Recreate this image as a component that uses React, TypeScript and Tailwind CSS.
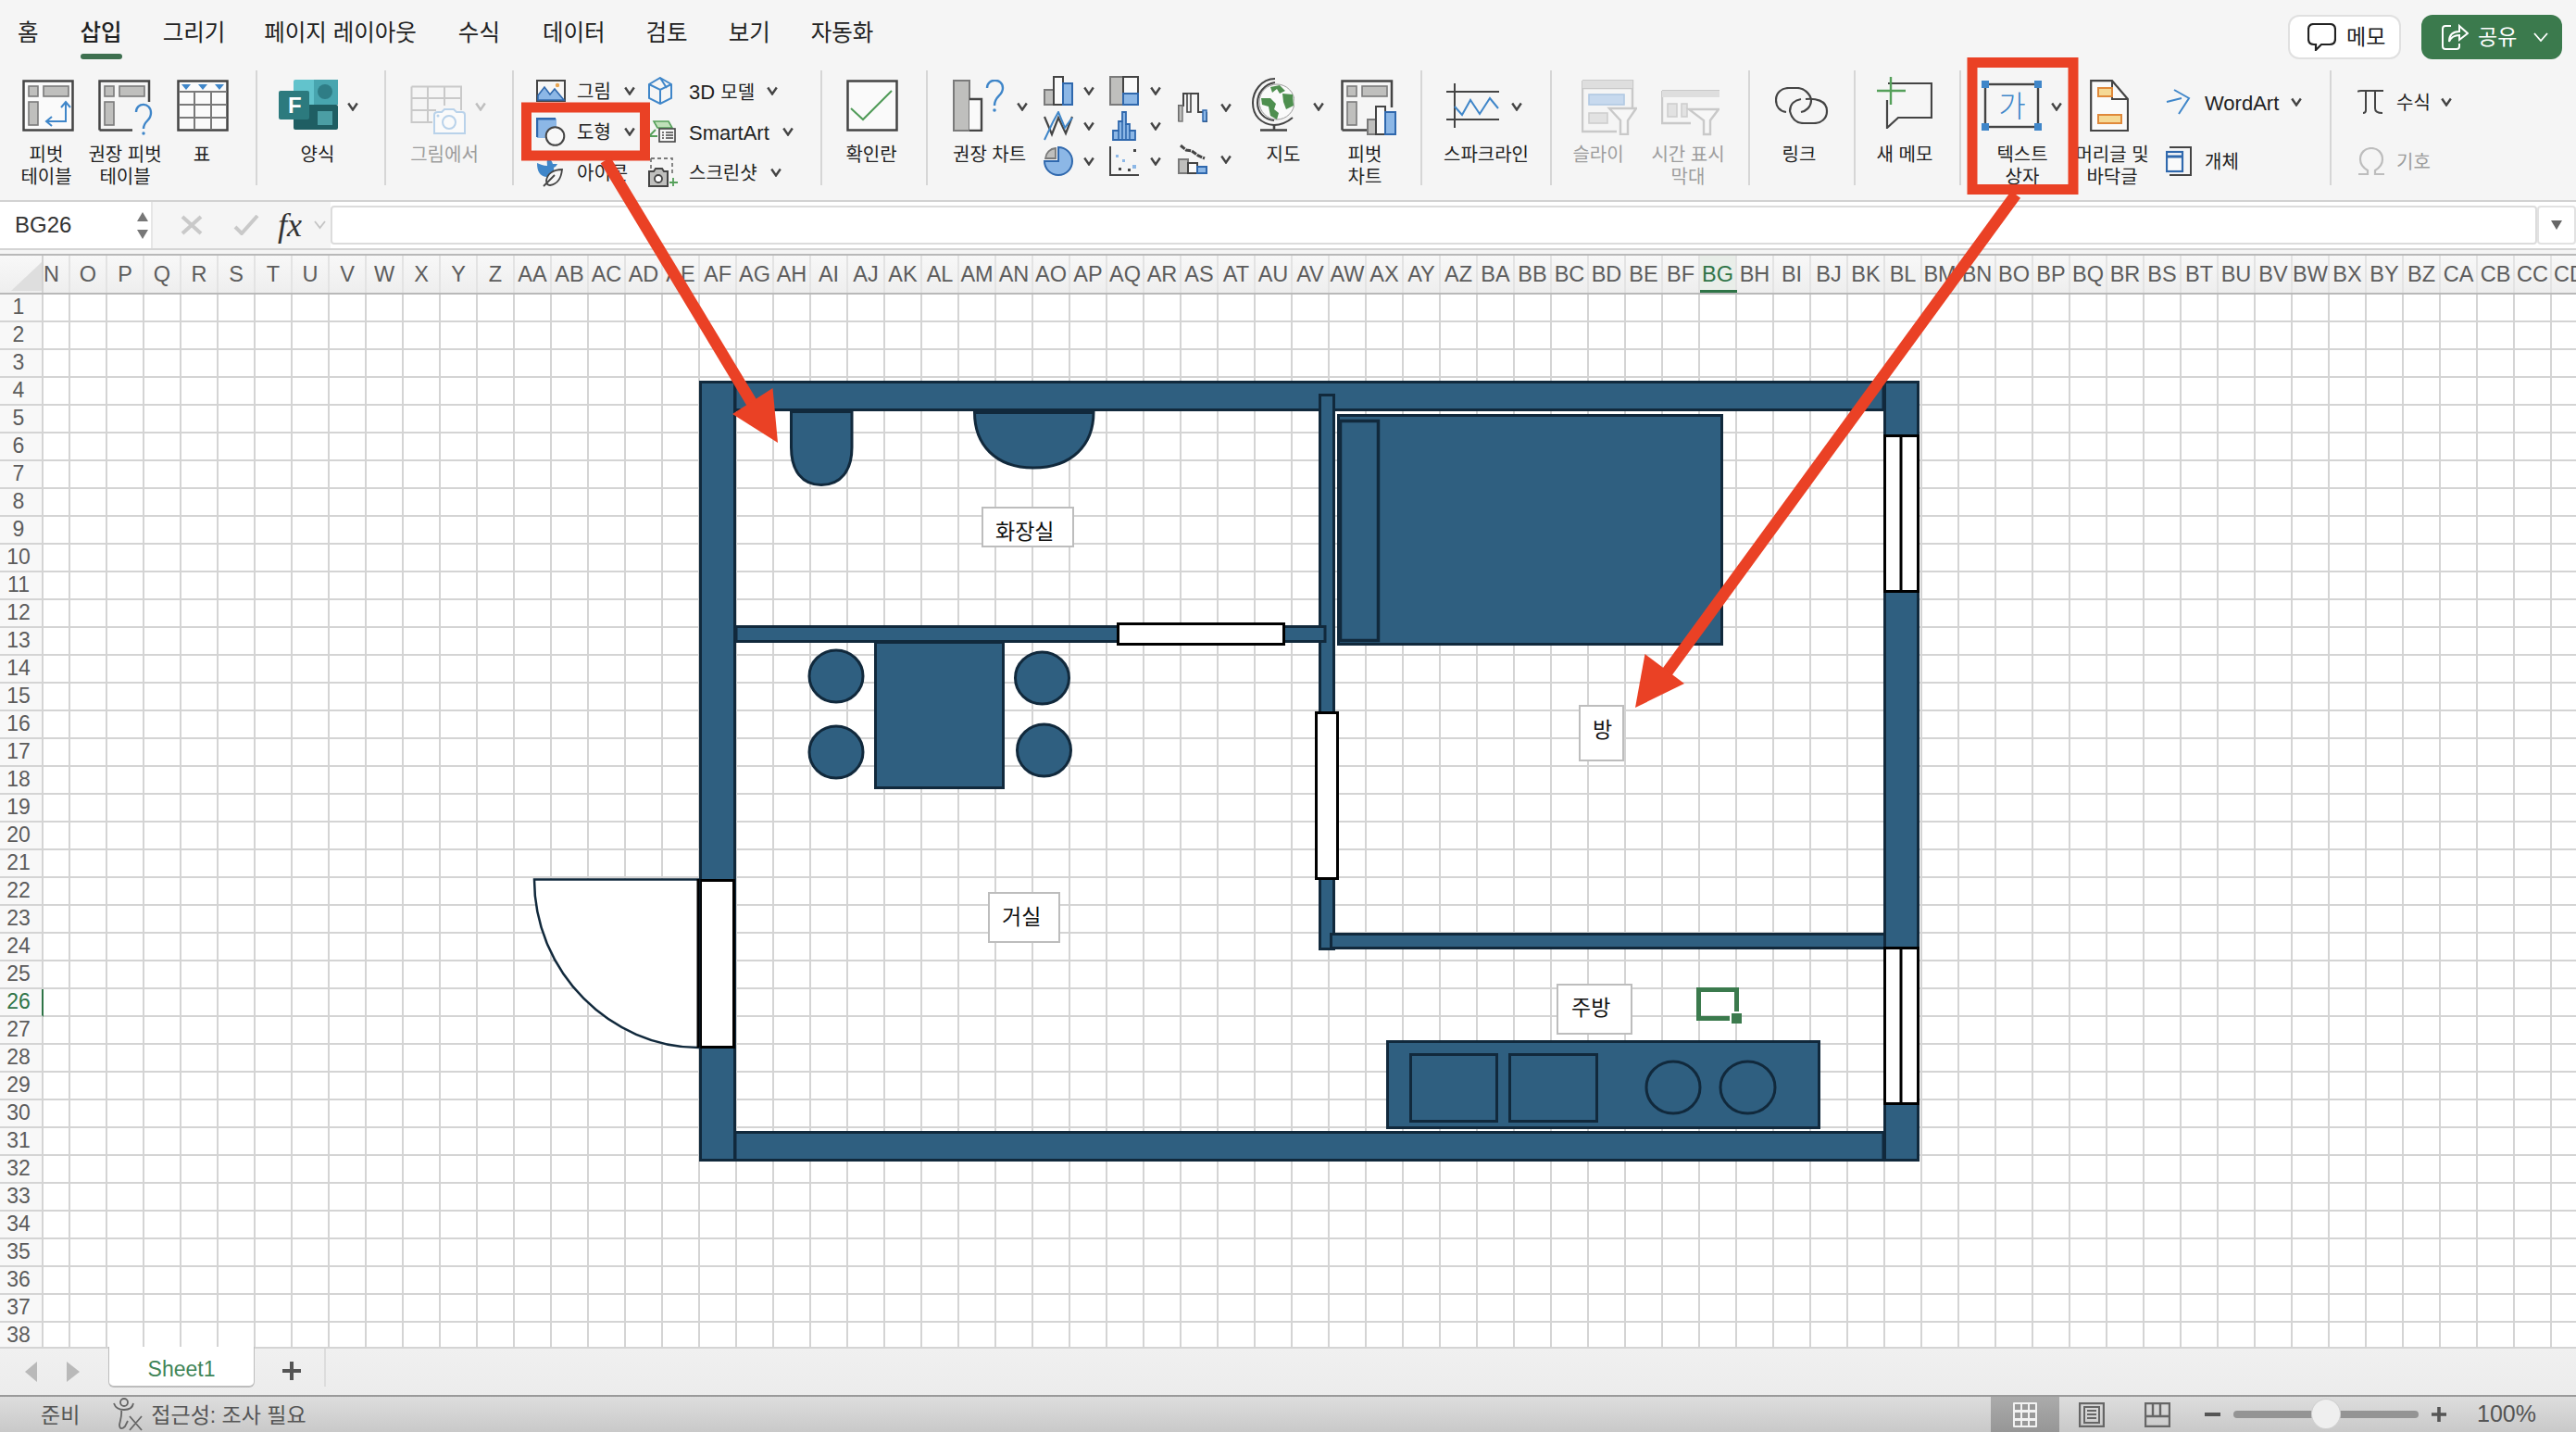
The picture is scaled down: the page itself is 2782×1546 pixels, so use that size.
import React from "react";

const Ic = ({ w, h, children, cls = "" }: { w: number; h: number; children: React.ReactNode; cls?: string }) => (
  <svg width={w} height={h} viewBox={`0 0 ${w} ${h}`} fill="none" className={`shrink-0 ${cls}`}>
    {children}
  </svg>
);

const Chev = ({ cls = "" }: { cls?: string }) => (
  <svg width="12" height="10" viewBox="0 0 12 10" fill="none" className={`shrink-0 ${cls}`}>
    <path d="M1.2 1.5L6 8.5L10.8 1.5" stroke="#444" strokeWidth="2.4" />
  </svg>
);

const G = "#bfbfbd";
const GS = "#7a7a7a";
const D = "#444";
const B = "#8cb7e6";
const BD = "#2f68ad";
const BM = "#3f86c9";

const PivotTable = () => (
  <Ic w={56} h={56}>
    <rect x="1.5" y="1.5" width="53" height="53" fill="#fafafa" stroke={D} strokeWidth="2.5" />
    <rect x="7" y="7" width="10" height="11" fill={G} stroke={GS} strokeWidth="1.6" />
    <rect x="23" y="7" width="27" height="11" fill={G} stroke={GS} strokeWidth="1.6" />
    <rect x="7" y="24" width="10" height="25" fill={G} stroke={GS} strokeWidth="1.6" />
    <path d="M47 24V45H27M42 30L47 24L52 30M32 40L26 45L32 50" stroke={BM} strokeWidth="2" />
  </Ic>
);
const RecPivot = () => (
  <Ic w={60} h={60}>
    <path d="M1.5 54.5V1.5H55V24M1.5 54.5H37" stroke={D} strokeWidth="2.5" />
    <rect x="7" y="7" width="10" height="11" fill={G} stroke={GS} strokeWidth="1.6" />
    <rect x="23" y="7" width="27" height="11" fill={G} stroke={GS} strokeWidth="1.6" />
    <rect x="7" y="24" width="10" height="25" fill={G} stroke={GS} strokeWidth="1.6" />
    <path d="M41 35C41 24 57 24 57 36C57 45 49 44 49 53" stroke={BM} strokeWidth="2.4" />
    <circle cx="49" cy="58" r="1.7" fill={BM} />
  </Ic>
);
const TableIc = () => (
  <Ic w={56} h={56}>
    <rect x="1.5" y="1.5" width="53" height="53" fill="#fafafa" stroke={D} strokeWidth="2.5" />
    <path d="M2 13H54M2 27H54M2 41H54M19 13V54M37 13V54" stroke={GS} strokeWidth="2" />
    <path d="M5 5H15L10 11ZM23 5H33L28 11ZM41 5H51L46 11Z" fill={BM} />
  </Ic>
);
const Forms = () => (
  <Ic w={64} h={54}>
    <rect x="16" y="0" width="48" height="27" rx="2" fill="#62c3cc" />
    <rect x="38" y="0" width="26" height="27" fill="#48a5af" />
    <circle cx="50" cy="13" r="8" fill="#2f7d86" />
    <rect x="16" y="27" width="48" height="27" rx="2" fill="#1f5e63" />
    <rect x="42" y="34" width="16" height="15" fill="#4b9ea4" />
    <rect x="0" y="12" width="33" height="31" rx="2" fill="#2c7a7e" />
    <text x="10" y="36" fontSize="24" fontWeight="700" fill="#fff" fontFamily="Liberation Sans, sans-serif">F</text>
  </Ic>
);
const FromPic = () => (
  <Ic w={60} h={54}>
    <path d="M1.5 1.5H55V27M1.5 1.5V40H24M19 1.5V40M37 1.5V22M1.5 14H55M1.5 27H28" stroke="#c9c9c9" strokeWidth="2" />
    <path d="M26 52V32C26 30 28 29 30 29H34L37 26H47L50 29H56C58 29 59 30 59 32V52Z" fill="#fafafa" stroke="#b9d2ea" strokeWidth="2" />
    <circle cx="42" cy="40" r="7" stroke="#b9d2ea" strokeWidth="2" />
    <circle cx="30" cy="33" r="1.5" fill="#b9d2ea" />
  </Ic>
);
const Picture = () => (
  <Ic w={32} h={24}>
    <rect x="1" y="1" width="30" height="22" fill="#f6f6f6" stroke={D} strokeWidth="2" />
    <path d="M2 22V17L9 8L15 16L20 10L30 22Z" fill={B} stroke={BD} strokeWidth="1.6" />
    <circle cx="23" cy="6" r="2.2" fill="#e9a552" />
  </Ic>
);
const Shapes = () => (
  <Ic w={32} h={31}>
    <rect x="1" y="1" width="21" height="21" fill={B} />
    <path d="M1 21V1.2H21" stroke={BD} strokeWidth="2.4" />
    <circle cx="20.5" cy="20" r="9.8" fill="#f8f8f8" stroke={D} strokeWidth="2" />
  </Ic>
);
const IconsIc = () => (
  <Ic w={30} h={31}>
    <path d="M1 5C1 14 4 19 11 20C17 19 20 16 19 10C21 9 22 8 23 6L18 6C17 3 15 0 13 1C11 2 12 5 12 8C8 8 4 6 1 5Z" fill={BM} />
    <path d="M28 12C18 12 12 17 11 24C11 27 12 29 15 29C22 28 27 22 28 12ZM8 30L20 18" fill="#f6f6f6" stroke={D} strokeWidth="1.8" />
  </Ic>
);
const Cube = () => (
  <Ic w={26} h={30}>
    <path d="M13 1L25 8V23L13 29L1 23V8ZM1 8L13 14L25 8M13 14V29M13 1L20 12" stroke={BM} strokeWidth="2" />
  </Ic>
);
const SmartArt = () => (
  <Ic w={30} h={24}>
    <path d="M6 1H22L26 8H10Z" fill="#bfe0b9" stroke="#55a05a" strokeWidth="1.6" />
    <path d="M1 17L8 10" stroke="#55a05a" strokeWidth="2" />
    <path d="M1 17H10" stroke="#55a05a" strokeWidth="2" />
    <rect x="12" y="9" width="17" height="14" fill="#f8f8f8" stroke={D} strokeWidth="1.6" />
    <path d="M15 13H17M19 13H27M15 16H17M19 16H27M15 19H17M19 19H27" stroke={D} strokeWidth="1.3" />
  </Ic>
);
const Screenshot = () => (
  <Ic w={32} h={32}>
    <path d="M3 1H26V19M3 1V15" stroke={GS} strokeWidth="1.8" strokeDasharray="4 3" />
    <path d="M1 31V15H6L8 12H15L17 15H21V31Z" fill={G} stroke={D} strokeWidth="2" />
    <circle cx="11" cy="23" r="4" fill="#fff" stroke={D} strokeWidth="1.8" />
    <path d="M27 22V31M23 27H32" stroke="#55a05a" strokeWidth="1.8" />
  </Ic>
);
const CheckIc = () => (
  <Ic w={56} h={56}>
    <rect x="1.5" y="1.5" width="53" height="53" fill="#fafafa" stroke={D} strokeWidth="2.5" />
    <path d="M5 31L18 43L49 12" stroke="#4f9a57" strokeWidth="2" />
  </Ic>
);
const RecChart = () => (
  <Ic w={56} h={56}>
    <rect x="1" y="1" width="17" height="54" fill={G} stroke={GS} strokeWidth="2" />
    <path d="M18 21H31V55H18" fill="#fafafa" stroke={D} strokeWidth="2.4" />
    <path d="M37 9C37 -2 54 -2 54 9C54 18 45 17 45 28" stroke={BM} strokeWidth="2.4" />
    <circle cx="45" cy="33" r="1.8" fill={BM} />
  </Ic>
);
const Col = () => (
  <Ic w={32} h={32}>
    <rect x="1" y="15" width="10" height="16" fill={G} stroke={GS} strokeWidth="2" />
    <rect x="11" y="1" width="10" height="30" fill="#fafafa" stroke={D} strokeWidth="2" />
    <rect x="21" y="8" width="10" height="23" fill={B} stroke={BD} strokeWidth="2" />
  </Ic>
);
const Hier = () => (
  <Ic w={32} h={32}>
    <rect x="1" y="1" width="14" height="30" fill={G} stroke={GS} strokeWidth="2" />
    <rect x="15" y="1" width="16" height="18" fill="#fafafa" stroke={D} strokeWidth="2" />
    <rect x="15" y="19" width="16" height="12" fill={B} stroke={BD} strokeWidth="2" />
  </Ic>
);
const LineC = () => (
  <Ic w={32} h={32}>
    <path d="M1 6L9 25L16 7L24 24L31 6" stroke={D} strokeWidth="2.2" />
    <path d="M1 31L10 12L16 1L23 18L31 7" stroke={BM} strokeWidth="2" />
  </Ic>
);
const Stat = () => (
  <Ic w={26} h={32}>
    <path d="M1 31V21H7V11H11V1H15V14H19V21H25V31Z" fill={B} stroke={BD} strokeWidth="1.8" />
    <path d="M7 21V31M11 11V31M15 14V31M19 21V31" stroke={BD} strokeWidth="1.6" />
  </Ic>
);
const Pie = () => (
  <Ic w={32} h={32}>
    <path d="M16 1A15 15 0 1 1 1 16H16Z" fill={B} stroke={BD} strokeWidth="2" />
    <path d="M13 2V13H2A12 12 0 0 1 13 2Z" fill={G} stroke={GS} strokeWidth="1.8" />
  </Ic>
);
const Scatter = () => (
  <Ic w={32} h={32}>
    <path d="M1 0V31H32" stroke={D} strokeWidth="2" />
    <path d="M7 9h3v3h-3zM14 14h3v3h-3zM25 20h4v4h-4z" fill={B} />
    <path d="M26 3h3v3h-3zM10 23h3v3h-3zM20 24h3v3h-3z" fill={D} />
  </Ic>
);
const Waterfall = () => (
  <Ic w={32} h={32}>
    <path d="M1 31V14H6V1H22V21H28V31H31V21" stroke={D} strokeWidth="2" />
    <rect x="1" y="14" width="4" height="17" fill={G} stroke={GS} strokeWidth="1.5" />
    <path d="M10 1H14V21H10Z" fill="#f5f5f5" stroke={D} strokeWidth="1.6" />
    <rect x="27" y="19" width="4" height="12" fill={B} stroke={BD} strokeWidth="1.5" />
  </Ic>
);
const Combo = () => (
  <Ic w={32} h={32}>
    <rect x="1" y="16" width="10" height="15" fill={G} stroke={GS} strokeWidth="2" />
    <rect x="11" y="20" width="10" height="11" fill="#fafafa" stroke={D} strokeWidth="2" />
    <rect x="21" y="24" width="10" height="7" fill={B} stroke={BD} strokeWidth="2" />
    <path d="M3 1L9 6L15 7L22 12L29 15" stroke={D} strokeWidth="3" strokeDasharray="6 1" />
  </Ic>
);
const Globe = () => (
  <Ic w={46} h={58}>
    <path d="M25 1C10 1 1 15 1 27C1 41 10 50 24 51C31 51 38 48 44 43" stroke={D} strokeWidth="2" />
    <path d="M25 5C13 7 6 17 6 27C6 37 13 45 24 46" stroke={D} strokeWidth="2" />
    <circle cx="27" cy="26" r="19" fill="#fafafa" stroke="#9a9a9a" strokeWidth="1" />
    <path d="M20 10L30 8L36 14L30 17L27 12L22 16ZM33 17L44 18L45 30L37 34L34 26ZM10 22L20 22L26 28L24 34L29 38L27 45L20 41L18 31L11 29Z" fill="#4e8f4f" />
    <path d="M24 51V56M9 56.5H38" stroke={D} strokeWidth="2.6" />
  </Ic>
);
const PivotChart = () => (
  <Ic w={60} h={60}>
    <path d="M1.5 54.5V1.5H55V30M1.5 54.5H28" stroke={D} strokeWidth="2.5" />
    <rect x="7" y="7" width="10" height="11" fill={G} stroke={GS} strokeWidth="1.6" />
    <rect x="23" y="7" width="27" height="11" fill={G} stroke={GS} strokeWidth="1.6" />
    <rect x="7" y="24" width="10" height="25" fill={G} stroke={GS} strokeWidth="1.6" />
    <rect x="29" y="43" width="10" height="16" fill={G} stroke={GS} strokeWidth="2" />
    <rect x="38" y="29" width="10" height="30" fill="#fafafa" stroke={D} strokeWidth="2" />
    <rect x="48" y="35" width="11" height="24" fill={B} stroke={BD} strokeWidth="2" />
  </Ic>
);
const Spark = () => (
  <Ic w={57} h={48}>
    <path d="M9 0V48M0 9H57M0 39H57" stroke={D} strokeWidth="2" />
    <path d="M9 25L17 34L26 18L36 33L47 16L56 27" stroke={BM} strokeWidth="2" />
  </Ic>
);
const Slicer = () => (
  <Ic w={60} h={60}>
    <path d="M1 1H55V30M1 1V56H38M1 9H55" stroke="#c9c9c9" strokeWidth="2.4" />
    <rect x="1" y="1" width="54" height="8" fill="#dedede" />
    <rect x="8" y="16" width="38" height="11" fill="#c7d9ee" stroke="#b1c9e3" strokeWidth="1.6" />
    <rect x="8" y="36" width="20" height="11" fill="#e2e2e2" stroke="#cfcfcf" strokeWidth="1.6" />
    <path d="M30 31H59L50 44V59H42V44Z" fill="#f7f7f7" stroke="#c9c9c9" strokeWidth="2.4" />
  </Ic>
);
const Timeline = () => (
  <Ic w={63} h={50}>
    <path d="M1 1H63M1 1V36H32" stroke="#c9c9c9" strokeWidth="2.4" />
    <rect x="1" y="1" width="62" height="7" fill="#dedede" />
    <rect x="7" y="15" width="10" height="14" fill="#e2e2e2" stroke="#cfcfcf" strokeWidth="1.6" />
    <rect x="22" y="15" width="6" height="14" fill="#e2e2e2" stroke="#cfcfcf" strokeWidth="1.6" />
    <path d="M30 21H62L53 33V48H46V33Z" fill="#f7f7f7" stroke="#c9c9c9" strokeWidth="2.4" />
  </Ic>
);
const LinkIc = () => (
  <Ic w={58} h={40}>
    <path d="M12 27C5 26 1 21 1 14C1 6 7 1 15 1H24C31 1 38 7 39 14C39 22 33 26 28 27" stroke={D} strokeWidth="2.2" />
    <path d="M33 13C43 12 56 14 56 26C56 34 50 39 42 39H31C23 39 18 34 16 26C16 18 22 14 28 13" stroke={D} strokeWidth="2.2" />
  </Ic>
);
const NewMemo = () => (
  <Ic w={60} h={56}>
    <path d="M12 7H59V44H23L11 55V25" fill="#f6f6f6" stroke={D} strokeWidth="2.2" />
    <path d="M15 0V30M0 15H31" stroke="#55a05a" strokeWidth="2.4" />
  </Ic>
);
const TextBoxIc = () => (
  <Ic w={66} h={54}>
    <rect x="4" y="4" width="57" height="46" stroke={D} strokeWidth="2.4" fill="#f6f6f6" />
    <rect x="0" y="0" width="8" height="8" fill={BM} />
    <rect x="57" y="0" width="8" height="8" fill={BM} />
    <rect x="0" y="46" width="8" height="8" fill={BM} />
    <rect x="57" y="46" width="8" height="8" fill={BM} />
    <text x="33" y="39" textAnchor="middle" fontSize="32" fill={BM} fontFamily="Noto Sans CJK KR, sans-serif" fontWeight="300">가</text>
  </Ic>
);
const HeaderFooter = () => (
  <Ic w={42} h={56}>
    <path d="M1.2 1.2H24L41 21V55H1.2Z" fill="#fafafa" stroke={D} strokeWidth="2.2" />
    <path d="M24 1.2V21H41" stroke={D} strokeWidth="2" />
    <rect x="9" y="9" width="15" height="9" fill="#f5d995" stroke="#e0893a" strokeWidth="2" />
    <rect x="9" y="38" width="25" height="9" fill="#f5d995" stroke="#e0893a" strokeWidth="2" />
  </Ic>
);
const WordArtIc = () => (
  <Ic w={27} h={28}>
    <path d="M9 1L25 10L14 27M1 14L17 10" stroke={BM} strokeWidth="2" />
  </Ic>
);
const ObjectIc = () => (
  <Ic w={28} h={32}>
    <path d="M4 1H27V31H4" stroke={D} strokeWidth="2" />
    <rect x="1" y="6" width="17" height="21" fill="#fafafa" stroke={BD} strokeWidth="2.2" />
    <path d="M1 11H18" stroke={BD} strokeWidth="3" />
  </Ic>
);
const PiIc = () => (
  <Ic w={28} h={26}>
    <path d="M0 2C1 1 2 1 4 1H28M9 1V22C9 24 8 25 6 25M19 1V20C19 24 22 25 27 25" stroke={D} strokeWidth="2" />
  </Ic>
);
const OmegaIc = () => (
  <Ic w={30} h={30}>
    <path d="M1 29H11V25C6 22 3 18 3 13C3 6 8 1 15 1C22 1 27 6 27 13C27 18 24 22 19 25V29H29" stroke="#bdbdbd" strokeWidth="2.2" />
  </Ic>
);

const Big = ({
  slot,
  iconRow,
  label,
  lines,
  labelCls = "text-center",
  gray = false,
  children,
}: {
  slot: string;
  iconRow: string;
  label?: string;
  lines?: string[];
  labelCls?: string;
  gray?: boolean;
  children: React.ReactNode;
}) => (
  <div className={`${slot} shrink-0 flex flex-col`}>
    <div className={`h-[79px] flex items-start ${iconRow}`}>{children}</div>
    <div className={`${labelCls} text-[20px] leading-[24px] whitespace-nowrap ${gray ? "text-[#9d9d9d]" : "text-[#222]"}`}>
      {lines ? lines.map((l) => <div key={l} className="flex justify-center">{l}</div>) : label}
    </div>
  </div>
);

const Sep = () => <div className="w-[2px] h-[124px] bg-[#d6d6d6] shrink-0" />;

const Small = ({
  h = "h-[44px]",
  slot,
  icon,
  children,
  chev,
  gray = false,
}: {
  h?: string;
  slot: string;
  icon: React.ReactNode;
  children: React.ReactNode;
  chev?: string;
  gray?: boolean;
}) => (
  <div className={`${h} flex items-center whitespace-nowrap text-[20px] ${gray ? "text-[#9d9d9d]" : "text-[#222]"}`}>
    <div className={`${slot} flex items-center shrink-0`}>{icon}</div>
    <span className="pt-[2px]">{children}</span>
    {chev ? <Chev cls={chev} /> : null}
  </div>
);

const ChartRow = ({ icon, chev, cls = "h-[32px] mb-[6px]" }: { icon: React.ReactNode; chev: string; cls?: string }) => (
  <div className={`${cls} flex items-center`}>
    {icon}
    <Chev cls={chev} />
  </div>
);

const tabs: [string, string][] = [
  ["홈", "ml-[19px]"],
  ["삽입", "ml-[45px]"],
  ["그리기", "ml-[44px]"],
  ["페이지 레이아웃", "ml-[42px]"],
  ["수식", "ml-[45px]"],
  ["데이터", "ml-[46px]"],
  ["검토", "ml-[44px]"],
  ["보기", "ml-[44px]"],
  ["자동화", "ml-[44px]"],
];

const colName = (i: number) => {
  if (i < 26) return String.fromCharCode(65 + i);
  return String.fromCharCode(64 + Math.floor(i / 26)) + String.fromCharCode(65 + (i % 26));
};
const cols: number[] = [];
for (let i = 14; i <= 81; i++) cols.push(i);
const rows: number[] = [];
for (let i = 1; i <= 38; i++) rows.push(i);

const WF = "#2f5f80";
const WS = "#11293c";
const RED = "#ea4125";

const Plan = () => (
  <svg width="2782" height="1546" viewBox="0 0 2782 1546" fill="none" className="absolute top-0 left-0 pointer-events-none">
    <g fill={WF} stroke={WS} strokeWidth="3">
      <rect x="794" y="412.5" width="1240" height="30" />
      <rect x="794" y="1222.5" width="1240" height="30" />
      <rect x="756.5" y="412.5" width="37" height="840" />
      <rect x="2035.5" y="412.5" width="36" height="840" />
      <rect x="1425.5" y="426.5" width="15" height="598" />
      <rect x="795" y="676.5" width="636" height="16" />
      <rect x="1437.5" y="1008.5" width="598" height="15" />
      <path d="M854.5 444.5H920V483C920 508 908 523.5 887 523.5C866 523.5 854.5 508 854.5 483Z" />
      <path d="M1052.5 445H1181C1181 480 1158 505 1116 505C1075 505 1052.5 480 1052.5 445Z" />
      <path d="M1052 444.5H1182" strokeWidth="5" />
      <rect x="1445.5" y="448.5" width="414" height="247" />
      <rect x="1447.5" y="454.5" width="41" height="237" strokeWidth="3.5" />
      <rect x="945.5" y="693.5" width="138" height="157" />
      <ellipse cx="903" cy="730" rx="29" ry="28" />
      <ellipse cx="1125.5" cy="732" rx="29" ry="28" />
      <ellipse cx="903" cy="812" rx="29" ry="28" />
      <ellipse cx="1127.5" cy="810" rx="29" ry="28" />
      <rect x="1498.5" y="1124.5" width="466" height="93" />
      <rect x="1523.5" y="1138.5" width="93" height="72" />
      <rect x="1630.5" y="1138.5" width="94" height="72" />
      <ellipse cx="1807" cy="1174" rx="29" ry="28" />
      <ellipse cx="1887.5" cy="1174" rx="29.5" ry="28" />
    </g>
    <g fill="#fff" stroke="#000" strokeWidth="3">
      <rect x="1207.5" y="673.5" width="179" height="22" />
      <rect x="1421.5" y="769.5" width="23" height="179" />
      <rect x="2035.5" y="470.5" width="36" height="168" />
      <path d="M2053 470V639" />
      <rect x="2035.5" y="1023.5" width="36" height="168" />
      <path d="M2053 1023V1192" />
      <rect x="756.5" y="950.5" width="36" height="180" />
    </g>
    <path d="M577 949.5H755V1131C660 1131 577 1050 577 949.5Z" fill="#fff" stroke={WS} strokeWidth="2.5" />
    <path d="M754 949V1131" stroke="#000" strokeWidth="3" />
  </svg>
);

const Annot = () => (
  <svg width="2782" height="1546" viewBox="0 0 2782 1546" fill="none" className="absolute top-0 left-0 pointer-events-none">
    <rect x="568.5" y="116" width="128" height="52" stroke={RED} strokeWidth="11" />
    <rect x="2130" y="67.5" width="109" height="137" stroke={RED} strokeWidth="11" />
    <path d="M654 173L815 440" stroke={RED} strokeWidth="12.5" />
    <path d="M840 478L834.5 419L791 447Z" fill={RED} />
    <path d="M2177 210L1795 733" stroke={RED} strokeWidth="12.5" />
    <path d="M1766 764L1776.5 706L1819 738Z" fill={RED} />
  </svg>
);

const Label = ({ cls, children }: { cls: string; children: React.ReactNode }) => (
  <div className={`absolute ${cls} bg-white border-2 border-[#bdbdbd] flex items-center text-[23px] text-[#111]`}>{children}</div>
);

export default function App() {
  return (
    <div className="relative w-[2782px] h-[1546px] overflow-hidden bg-white flex flex-col font-['Liberation_Sans','Noto_Sans_CJK_KR',sans-serif]">
      {/* title tabs */}
      <div className="h-[218px] shrink-0 bg-[#f5f5f5] border-b-2 border-[#d2d2d2]">
        <div className="h-[76px] flex items-start justify-between relative">
          <div className="flex h-[64px] items-start pt-[20px] text-[24.5px] leading-[32px] text-[#222]">
            {tabs.map(([t, m]) => (
              <div key={t} className={`${m} relative whitespace-nowrap`}>
                <span className={t === "삽입" ? "font-medium" : ""}>{t}</span>
                {t === "삽입" ? <div className="absolute left-0 right-0 top-[38px] h-[6px] rounded-full bg-[#3d6f4f]" /> : null}
              </div>
            ))}
          </div>
          <div className="flex gap-[22px] pt-[16px] pr-[15px]">
            <div className="w-[122px] h-[48px] rounded-[12px] bg-white border-2 border-[#e0e0e0] flex items-center pl-[19px] text-[23px] text-[#222]">
              <Ic w={31} h={30} cls="mr-[11px]">
                <path d="M7 1H24C28 1 30 3 30 7V17C30 21 28 23 24 23H15L9 29V23H7C3 23 1 21 1 17V7C1 3 3 1 7 1Z" stroke="#222" strokeWidth="2.2" />
              </Ic>
              메모
            </div>
            <div className="w-[152px] h-[48px] rounded-[12px] bg-[#3b7a4d] flex items-center pl-[21px] text-[23px] text-white">
              <Ic w={30} h={30} cls="mr-[10px]">
                <path d="M11 3H5C3 3 2 4 2 6V25C2 27 3 28 5 28H17C19 28 20 27 20 25V22" stroke="#fff" strokeWidth="2" />
                <path d="M9 20C9 13 13 9 20 9V3L29 11L20 18V13C15 13 11 15 9 20Z" stroke="#fff" strokeWidth="2" />
              </Ic>
              공유
              <Ic w={16} h={10} cls="ml-[18px]">
                <path d="M1 1L8 9L15 1" stroke="#fff" strokeWidth="1.8" />
              </Ic>
            </div>
          </div>
        </div>

        {/* ribbon */}
        <div className="h-[140px] flex items-start">
          <div className="w-[8px] shrink-0" />
          <Big slot="w-[84px]" iconRow="pl-[16px] pt-[10px]" lines={["피벗", "테이블"]}>
            <PivotTable />
          </Big>
          <Big slot="w-[86px]" iconRow="pl-[14px] pt-[10px]" lines={["권장 피벗", "테이블"]}>
            <RecPivot />
          </Big>
          <Big slot="w-[80px]" iconRow="pl-[13px] pt-[10px]" label="표">
            <TableIc />
          </Big>
          <div className="w-[18px] shrink-0" />
          <Sep />
          <Big slot="w-[130px]" iconRow="pl-[23px] pt-[10px]" label="양식">
            <Forms />
            <Chev cls="ml-[10px] mt-[24px]" />
          </Big>
          <div className="w-[7px] shrink-0" />
          <Sep />
          <Big slot="w-[126px]" iconRow="pl-[26px] pt-[16px]" label="그림에서" gray>
            <FromPic />
            <Chev cls="ml-[10px] mt-[18px] opacity-30" />
          </Big>
          <div className="w-[10px] shrink-0" />
          <Sep />
          <div className="w-[24px] shrink-0" />
          <div className="w-[121px] shrink-0 flex flex-col">
            <Small slot="w-[44px]" icon={<Picture />} chev="ml-[14px]">그림</Small>
            <Small slot="w-[44px]" icon={<Shapes />} chev="ml-[14px]">도형</Small>
            <Small slot="w-[44px]" icon={<IconsIc />}>아이콘</Small>
          </div>
          <div className="w-[186px] shrink-0 flex flex-col">
            <Small slot="w-[44px]" icon={<Cube />} chev="ml-[13px]"><span className="text-[22px]">3D </span>모델</Small>
            <Small slot="w-[44px]" icon={<SmartArt />} chev="ml-[14px]"><span className="text-[22px]">SmartArt</span></Small>
            <Small slot="w-[44px]" icon={<Screenshot />} chev="ml-[14px]">스크린샷</Small>
          </div>
          <Sep />
          <Big slot="w-[106px]" iconRow="pl-[26px] pt-[10px]" label="확인란">
            <CheckIc />
          </Big>
          <div className="w-[6px] shrink-0" />
          <Sep />
          <Big slot="w-[125px]" iconRow="pl-[27px] pt-[10px]" label="권장 차트" labelCls="pl-[27px]">
            <RecChart />
            <Chev cls="ml-[13px] mt-[24px]" />
          </Big>
          <div className="w-[71px] shrink-0 flex flex-col pt-[6px]">
            <ChartRow icon={<Col />} chev="ml-[11px]" />
            <ChartRow icon={<LineC />} chev="ml-[11px]" />
            <ChartRow icon={<Pie />} chev="ml-[11px]" />
          </div>
          <div className="w-[74px] shrink-0 flex flex-col pt-[6px]">
            <ChartRow icon={<Hier />} chev="ml-[12px]" />
            <ChartRow icon={<Stat />} chev="ml-[15px]" cls="h-[32px] mb-[6px] pl-[3px]" />
            <ChartRow icon={<Scatter />} chev="ml-[12px]" />
          </div>
          <div className="w-[80px] shrink-0 flex flex-col pt-[24px]">
            <ChartRow icon={<Waterfall />} chev="ml-[14px]" cls="h-[32px] mb-[24px]" />
            <ChartRow icon={<Combo />} chev="ml-[14px]" />
          </div>
          <Big slot="w-[96px]" iconRow="pt-[8px]" label="지도" labelCls="w-[68px] text-center">
            <Globe />
            <Chev cls="ml-[20px] mt-[26px]" />
          </Big>
          <Big slot="w-[86px]" iconRow="pt-[10px]" lines={["피벗", "차트"]} labelCls="w-[52px]">
            <PivotChart />
          </Big>
          <Sep />
          <Big slot="w-[138px]" iconRow="pl-[26px] pt-[14px]" label="스파크라인">
            <Spark />
            <Chev cls="ml-[13px] mt-[20px]" />
          </Big>
          <Sep />
          <Big slot="w-[100px]" iconRow="pl-[32px] pt-[10px]" label="슬라이" gray>
            <Slicer />
          </Big>
          <Big slot="w-[94px]" iconRow="pl-[18px] pt-[21px]" lines={["시간 표시", "막대"]} gray>
            <Timeline />
          </Big>
          <div className="w-[18px] shrink-0" />
          <Sep />
          <Big slot="w-[106px]" iconRow="pl-[27px] pt-[18px]" label="링크">
            <LinkIc />
          </Big>
          <div className="w-[6px] shrink-0" />
          <Sep />
          <Big slot="w-[106px]" iconRow="pl-[23px] pt-[7px]" label="새 메모">
            <NewMemo />
          </Big>
          <div className="w-[6px] shrink-0" />
          <Sep />
          <Big slot="w-[132px]" iconRow="pl-[22px] pt-[11px]" lines={["텍스트", "상자"]}>
            <TextBoxIc />
            <Chev cls="ml-[9px] mt-[23px]" />
          </Big>
          <Big slot="w-[62px]" iconRow="pl-[7px] pt-[10px]" lines={["머리글 및", "바닥글"]}>
            <HeaderFooter />
          </Big>
          <div className="w-[204px] shrink-0 flex flex-col pl-[27px] pt-[18px]">
            <Small h="h-[32px] mb-[32px]" slot="w-[42px]" icon={<WordArtIc />} chev="ml-[13px]"><span className="text-[22px]">WordArt</span></Small>
            <Small h="h-[32px]" slot="w-[42px]" icon={<ObjectIc />}>개체</Small>
          </div>
          <Sep />
          <div className="flex flex-col pl-[28px] pt-[18px]">
            <Small h="h-[32px] mb-[32px]" slot="w-[42px]" icon={<PiIc />} chev="ml-[11px]">수식</Small>
            <Small h="h-[32px]" slot="w-[42px]" icon={<OmegaIc />} gray>기호</Small>
          </div>
        </div>
      </div>

      {/* formula bar */}
      <div className="h-[52px] shrink-0 bg-white border-b-2 border-[#d4d4d4] flex items-center">
        <div className="w-[165px] h-full bg-white flex items-center pl-[16px] text-[24px] text-[#333] border-r-2 border-[#e6e6e6] shrink-0 relative">
          BG26
          <div className="absolute right-[3px] top-[11px] flex flex-col gap-[9px]">
            <div className="w-0 h-0 border-x-[6px] border-x-transparent border-b-[10px] border-b-[#777]" />
            <div className="w-0 h-0 border-x-[6px] border-x-transparent border-t-[10px] border-t-[#777]" />
          </div>
        </div>
        <div className="w-[192px] h-full bg-[#f5f5f5] flex items-center shrink-0 pl-[30px]">
          <Ic w={24} h={22}>
            <path d="M2 2L22 20M22 2L2 20" stroke="#c9c9c9" strokeWidth="4" />
          </Ic>
          <Ic w={28} h={22} cls="ml-[33px]">
            <path d="M2 13L9 20L26 1" stroke="#c9c9c9" strokeWidth="4" />
          </Ic>
          <span className="ml-[20px] font-['Liberation_Serif',serif] italic text-[36px] text-[#333] leading-none">fx</span>
          <Ic w={13} h={10} cls="ml-[13px]">
            <path d="M1 1L6.5 8L12 1" stroke="#c4c4c4" strokeWidth="1.8" />
          </Ic>
        </div>
        <div className="flex-1 h-[42px] bg-white border-2 border-[#dcdcdc] rounded-[4px] flex justify-end" />
        <div className="w-[42px] h-[42px] border-2 border-[#e2e2e2] bg-white rounded-[4px] flex items-center justify-center shrink-0">
          <div className="w-0 h-0 border-x-[6px] border-x-transparent border-t-[10px] border-t-[#666]" />
        </div>
      </div>
      <div className="h-[4px] shrink-0 bg-[#f5f5f5]" />

      {/* column header */}
      <div className="h-[44px] shrink-0 flex border-b-2 border-t-2 border-[#b9b9b9] bg-gradient-to-b from-[#f8f8f8] to-[#eeeeee] text-[23.5px] text-[#5c5c5c] overflow-hidden">
        <div className="w-[47px] shrink-0 border-r-2 border-[#d2d2d2] relative">
          <div className="absolute left-[12px] top-[7px] w-0 h-0 border-l-[33px] border-l-transparent border-b-[31px] border-b-[#dedede]" />
        </div>
        <div className="w-[29px] shrink-0 border-r-2 border-[#e3e3e3] flex items-center justify-end pr-[10px] pt-[2px]">N</div>
        {cols.map((c) => (
          <div
            key={c}
            className={`w-[40px] shrink-0 border-r-2 flex items-center justify-center whitespace-nowrap relative pt-[2px] ${
              c === 58 ? "border-[#e3e3e3] text-[#2f7447] bg-[#e9eee9]" : "border-[#e3e3e3]"
            }`}
          >
            {colName(c)}
            {c === 58 ? <div className="absolute left-0 right-[-2px] bottom-0 h-[3px] bg-[#2f7447]" /> : null}
          </div>
        ))}
      </div>

      {/* sheet */}
      <div className="flex-1 min-h-0 overflow-hidden">
        {rows.map((r) => (
          <div key={r} className="h-[30px] flex">
            <div
              className={`w-[47px] shrink-0 border-r-2 border-b-2 flex items-center justify-center text-[23px] pr-[5px] pb-[2px] bg-[#f8f8f8] ${
                r === 26 ? "text-[#2f7447] border-r-[#2f7447] border-b-[#d4d4d4]" : "text-[#5c5c5c] border-[#d4d4d4]"
              }`}
            >
              {r}
            </div>
            <div className="w-[29px] shrink-0 border-r-2 border-b-2 border-[#d4d4d4]" />
            {cols.map((c) => (
              <div key={c} className="w-[40px] shrink-0 border-r-2 border-b-2 border-[#d4d4d4]" />
            ))}
          </div>
        ))}
      </div>

      {/* sheet tabs */}
      <div className="h-[52px] shrink-0 bg-gradient-to-b from-[#f0f0f0] to-[#ececec] border-t-2 border-[#d4d4d4] flex items-start">
        <div className="w-0 h-0 ml-[27px] mt-[14px] border-y-[11px] border-y-transparent border-r-[13px] border-r-[#b9b9b9]" />
        <div className="w-0 h-0 ml-[32px] mt-[14px] border-y-[11px] border-y-transparent border-l-[14px] border-l-[#b9b9b9]" />
        <div className="ml-[31px] w-[158px] h-[44px] bg-white rounded-b-[6px] border-x border-b-2 border-[#bdbdbd] flex items-center justify-center pt-[7px] text-[23px] text-[#3f8558] -mt-[2px]">
          Sheet1
        </div>
        <Ic w={22} h={22} cls="ml-[29px] mt-[13px]">
          <path d="M11 1V21M1 11H21" stroke="#555" strokeWidth="4" />
        </Ic>
        <div className="w-[2px] h-[41px] bg-[#dcdcdc] ml-[24px]" />
      </div>

      {/* status bar */}
      <div className="h-[40px] shrink-0 bg-gradient-to-b from-[#dddddd] to-[#c9c9c9] border-t-2 border-[#9a9a9a] flex items-center text-[23px] text-[#555]">
        <span className="ml-[44px] pt-[2px]">준비</span>
        <Ic w={32} h={36} cls="ml-[36px]">
          <circle cx="12" cy="5" r="4" stroke="#666" strokeWidth="1.8" />
          <path d="M1 6C3 12 8 13 12 13C16 13 21 12 22 6M9 13C10 19 8 24 7 29C7 33 9 35 13 31L16 25M18 20L31 35M31 20L18 35" stroke="#666" strokeWidth="1.8" />
        </Ic>
        <span className="ml-[9px] pt-[2px]">접근성: 조사 필요</span>
        <div className="flex-1" />
        <div className="w-[74px] h-full bg-gradient-to-b from-[#ababab] to-[#969696] flex items-center justify-center shrink-0">
          <Ic w={26} h={27}>
            <rect width="26" height="27" rx="1" fill="#f2f2f2" />
            <path d="M2 2h6v6h-6zM10 2h6v6h-6zM18 2h6v6h-6zM2 11h6v6h-6zM10 11h6v6h-6zM18 11h6v6h-6zM2 20h6v5h-6zM10 20h6v5h-6zM18 20h6v5h-6z" fill="#999" />
          </Ic>
        </div>
        <Ic w={28} h={27} cls="ml-[21px]">
          <rect x="1" y="1" width="26" height="25" stroke="#666" strokeWidth="2.4" />
          <rect x="6" y="5" width="16" height="17" stroke="#666" strokeWidth="2" />
          <path d="M9 9H19M9 13H19M9 17H19" stroke="#666" strokeWidth="2" />
        </Ic>
        <Ic w={28} h={27} cls="ml-[43px]">
          <path d="M1 1H27V26H1ZM1 15H27M9 1V15M17 1V15" stroke="#666" strokeWidth="2.4" />
        </Ic>
        <div className="w-[17px] h-[4px] bg-[#555] ml-[37px]" />
        <div className="w-[200px] h-[8px] rounded-full bg-[#949494] ml-[14px] relative">
          <div className="absolute left-[84px] top-[-13px] w-[32px] h-[33px] rounded-[50%] bg-[#efefef] border border-[#d0d0d0]" />
        </div>
        <Ic w={16} h={16} cls="ml-[14px]">
          <path d="M8 0V16M0 8H16" stroke="#555" strokeWidth="3.6" />
        </Ic>
        <span className="ml-[33px] text-[25px] text-[#555] mr-[43px]">100%</span>
      </div>

      {/* drawing layer on the worksheet */}
      <Plan />
      <Label cls="left-[1060px] top-[547px] w-[100px] h-[44px] pl-[13px] pt-[10px]">화장실</Label>
      <Label cls="left-[1705px] top-[761px] w-[49px] h-[61px] pl-[13px] pb-[6px]">방</Label>
      <Label cls="left-[1067px] top-[963px] w-[78px] h-[55px] pl-[13px]">거실</Label>
      <Label cls="left-[1681px] top-[1062px] w-[82px] h-[55px] pl-[14px] pb-[2px]">주방</Label>
      <div className="absolute left-[1832px] top-[1066px] w-[46px] h-[36px] border-[5px] border-[#3b7a4d]" />
      <div className="absolute left-[1868px] top-[1092px] w-[13px] h-[13px] bg-[#3b7a4d] border-l-2 border-t-2 border-white" />
      <Annot />
    </div>
  );
}
